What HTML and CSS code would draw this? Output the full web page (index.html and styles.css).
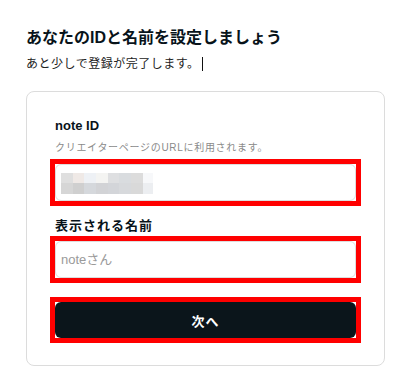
FILE: index.html
```html
<!DOCTYPE html>
<html lang="ja">
<head>
<meta charset="utf-8">
<link rel="stylesheet" href="styles.css">
</head>
<body>
<main class="page">
  <h1 class="title">あなたのIDと名前を設定しましょう</h1>
  <p class="lead">あと少しで登録が完了します。<span class="caret"></span></p>
  <section class="card">
    <div class="label">note ID</div>
    <div class="help">クリエイターページのURLに利用されます。</div>
    <div class="hl">
      <div class="field">
        <div class="blur">
          <i class="b1"></i><i class="b2"></i><i class="b3"></i><i class="b4"></i><i class="b5"></i><i class="b6"></i><i class="b7"></i><i class="b8"></i>
          <i class="c1"></i><i class="c2"></i><i class="c3"></i><i class="c4"></i><i class="c5"></i><i class="c6"></i><i class="c7"></i><i class="c8"></i>
        </div>
      </div>
    </div>
    <div class="label label2">表示される名前</div>
    <div class="hl">
      <input class="field input" type="text" placeholder="noteさん">
    </div>
    <div class="hl hl-btn">
      <button class="btn" type="button">次へ</button>
    </div>
  </section>
</main>
</body>
</html>
```
FILE: styles.css
```css
* { box-sizing: border-box; }
html, body { margin: 0; padding: 0; background: #fff; }
body {
  font-family: "Liberation Sans", "Noto Sans CJK JP", sans-serif;
  color: #08131a;
}
.page {
  width: 359px;
  margin-left: 26px;
  padding-top: 27px;
}
.title {
  margin: 0;
  font-size: 16px;
  line-height: 22px;
  font-weight: 700;
}
.lead {
  margin: 6px 0 0;
  font-size: 12px;
  line-height: 18px;
  letter-spacing: 0.5px;
  color: #222;
  display: flex;
  align-items: center;
}
.caret {
  display: inline-block;
  width: 1px;
  height: 14px;
  background: #111;
  margin-left: 3px;
}
.card {
  margin-top: 18px;
  border: 1px solid #dcdcdc;
  border-radius: 8px;
  padding: 24px 28px 22px;
}
.label {
  font-size: 13px;
  line-height: 20px;
  font-weight: 700;
  color: #08131a;
}
.help {
  margin-top: 4px;
  font-size: 10px;
  line-height: 16px;
  letter-spacing: 0.7px;
  color: #8a8a8a;
}
.hl {
  margin: 3px -5px 0;
  border: 5px solid #ff0000;
}
.label2 { margin-top: 10px; letter-spacing: 1px; }
.label2 + .hl { margin-top: 0; }
.field {
  display: block;
  width: 100%;
  height: 37px;
  border: 1px solid #dddddd;
  border-radius: 6px;
  background: #fff;
  padding: 0 5px;
}
.field:has(.blur) {
  display: flex;
  align-items: center;
}
.input {
  font-family: "Liberation Sans", "Noto Sans CJK JP", sans-serif;
  font-size: 13px;
  color: #333;
  outline: none;
}
.input::placeholder { color: #9a9a9a; }
.blur {
  display: grid;
  grid-template-columns: repeat(7, 11.7px) 10px;
  grid-template-rows: 10px 11px;
  margin-top: 1px;
}
.blur i { display: block; }
.b1 { background: #dfdfdf; }
.b2 { background: #efe9e6; }
.b3 { background: #eef1f5; }
.b4 { background: #f4f4f2; }
.b5 { background: #dedfe1; }
.b6 { background: #d9dcdf; }
.b7 { background: #dcdcdc; }
.b8 { background: #f7f8fa; }
.c1 { background: #d6d6d6; }
.c2 { background: #cfcfcf; }
.c3 { background: #d5d8dc; }
.c4 { background: #d2d3d6; }
.c5 { background: #d3d5d9; }
.c6 { background: #d7d9dc; }
.c7 { background: #d9d9d9; }
.c8 { background: #eceef1; }
.hl-btn { margin-top: 14px; }
.btn {
  display: block;
  width: 100%;
  height: 36px;
  border: 0;
  border-radius: 6px;
  background: #0b151b;
  color: #fff;
  font-family: "Liberation Sans", "Noto Sans CJK JP", sans-serif;
  font-size: 13px;
  font-weight: 700;
  letter-spacing: 1px;
  cursor: pointer;
}
```
